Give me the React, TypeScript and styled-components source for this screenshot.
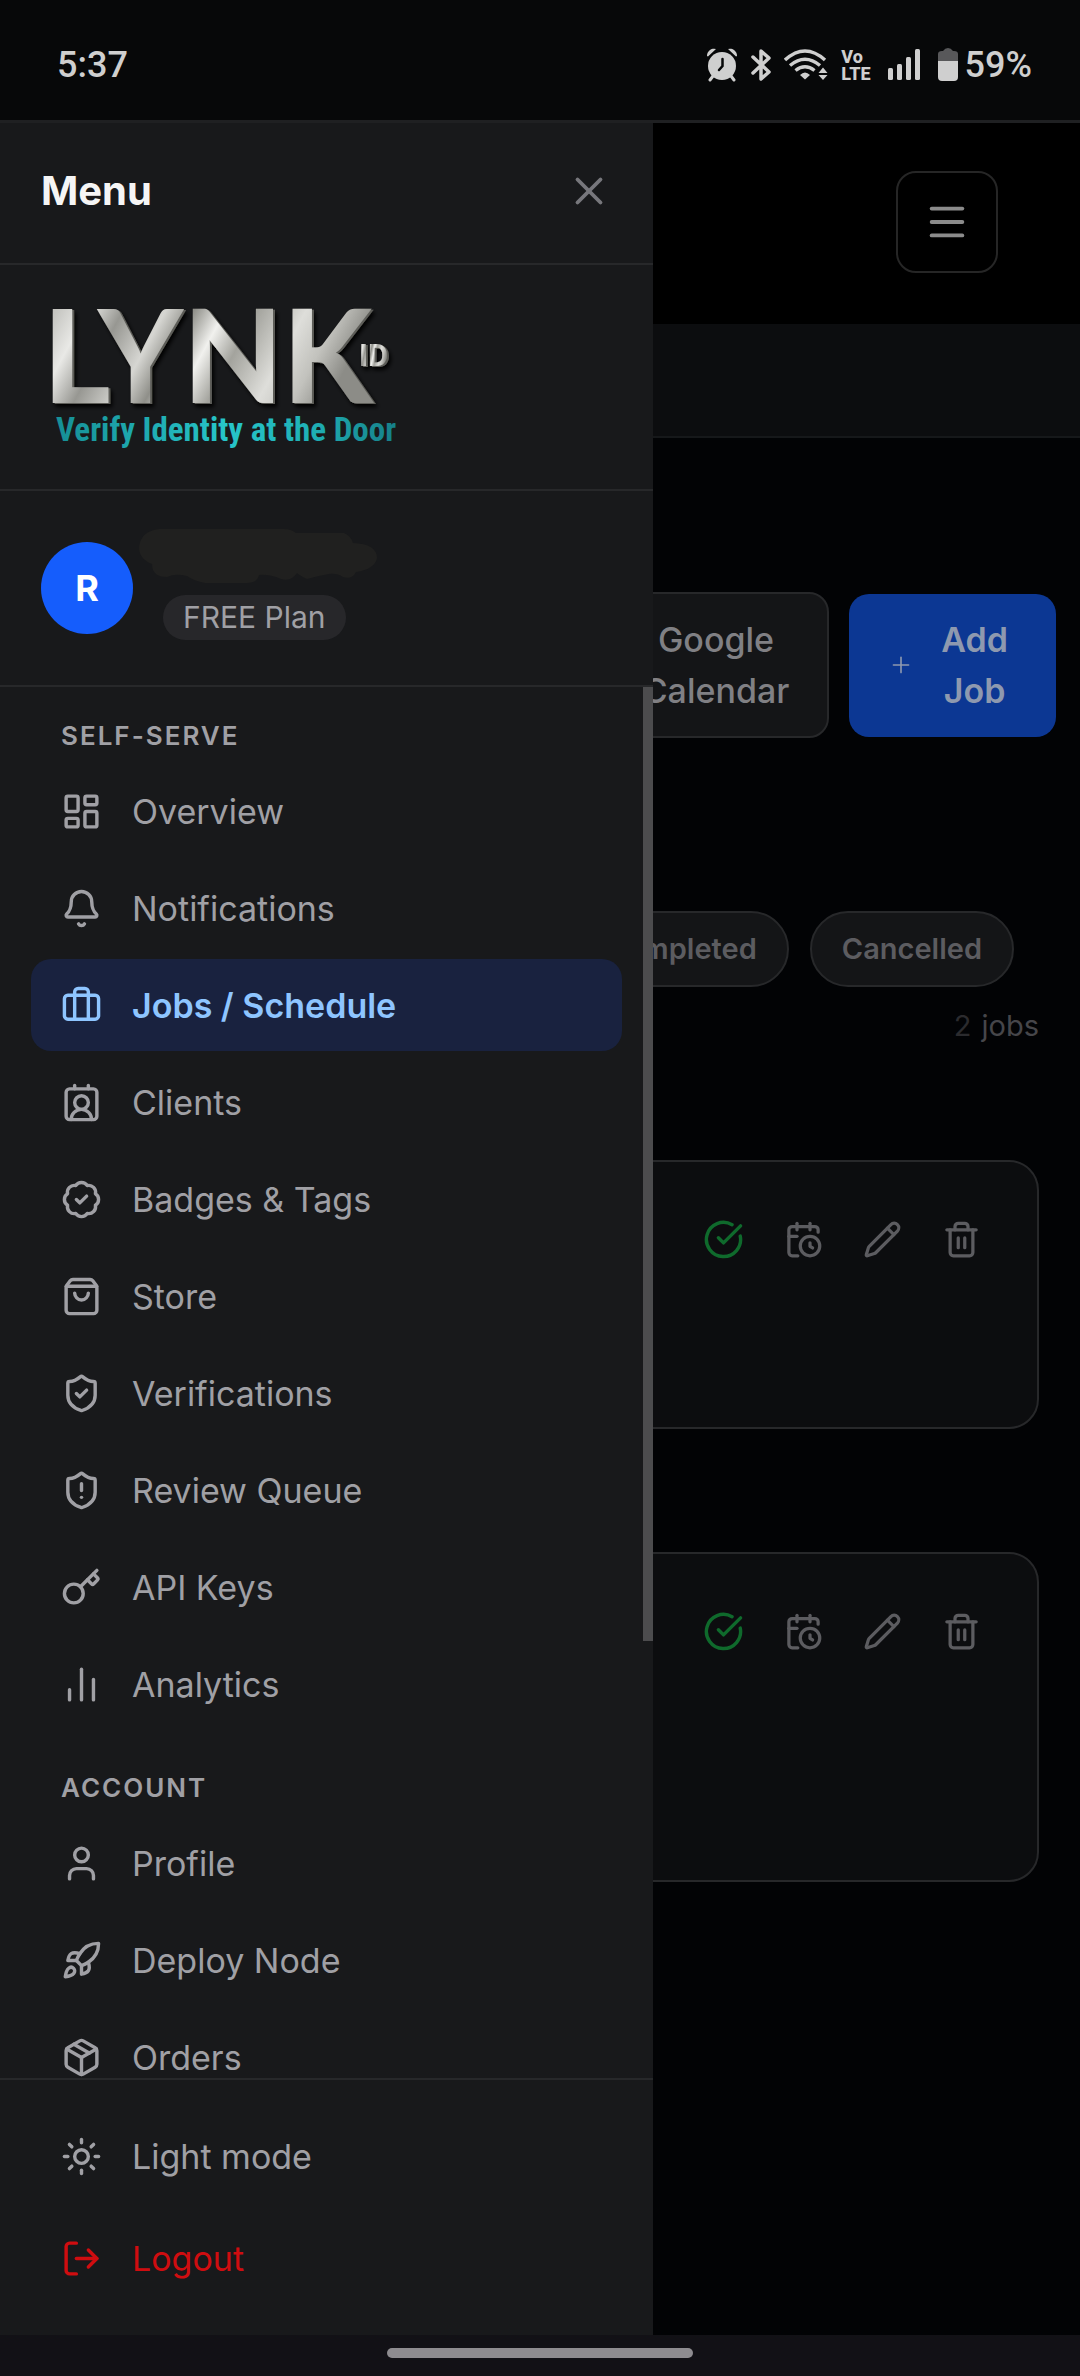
import React from 'react';
import styled, { createGlobalStyle, css } from 'styled-components';
import {
  BadgeCheck,
  Bell,
  Briefcase,
  CalendarClock,
  ChartNoAxesColumn,
  CircleCheckBig,
  ContactRound,
  Key,
  LayoutDashboard,
  LogOut,
  Menu as MenuIcon,
  Package,
  Pencil,
  Plus,
  Rocket,
  ShieldAlert,
  ShieldCheck,
  ShoppingBag,
  Sun,
  Trash2,
  User,
  X,
  type LucideIcon,
} from 'lucide-react';

const color = {
  page: '#020305',
  panel: '#18191b',
  line: '#27282a',
  surface: '#0c0d0f',
  control: '#141517',
  muted: '#a0a0a5',
  dim: '#5c5c60',
  status: '#cfcfcf',
};

const GlobalStyle = createGlobalStyle`
  *, *::before, *::after { box-sizing: border-box; }
  body {
    margin: 0;
    background: ${color.page};
    font-family: Inter, Roboto, "Liberation Sans", sans-serif;
    color: ${color.muted};
  }
  button { font: inherit; color: inherit; border: 0; background: none; padding: 0; cursor: pointer; }
  a { color: inherit; text-decoration: none; }
  ul { list-style: none; margin: 0; padding: 0; }
  h1, h2, p { margin: 0; }
  svg { flex: none; display: block; }
`;

const Screen = styled.div`
  display: flex;
  flex-direction: column;
  height: 100vh;
  overflow: hidden;
`;

/* ---------- device bars ---------- */

const StatusBar = styled.header`
  display: flex;
  align-items: center;
  justify-content: space-between;
  height: 123px;
  padding: 9px 48px 0 57px;
  background: #070809;
  border-bottom: 3px solid #1f2022;
  font-family: Roboto, sans-serif;
  font-size: 36px;
  font-weight: 500;
  color: ${color.status};
`;

const StatusIcons = styled.div`
  display: flex;
  align-items: center;
  gap: 13px;
`;

const Volte = styled.span`
  display: flex;
  flex-direction: column;
  padding-right: 4px;
  font-size: 18px;
  font-weight: 800;
  line-height: 17px;
`;

const Battery = styled.span`
  display: flex;
  align-items: center;
  gap: 7px;
  padding-left: 4px;
`;

const GestureBar = styled.footer`
  display: flex;
  flex: none;
  align-items: center;
  justify-content: center;
  height: 41px;
  padding-bottom: 6px;
  background: #121116;

  &::before {
    content: '';
    width: 306px;
    height: 10px;
    border-radius: 5px;
    background: #8e8c90;
  }
`;

/* ---------- page behind the drawer ---------- */

const Stage = styled.div`
  position: relative;
  flex: 1;
  min-height: 0;
`;

const Page = styled.main`
  height: 100%;
  overflow: hidden;
`;

const TopBar = styled.div`
  display: flex;
  justify-content: flex-end;
  padding: 48px 82px 51px;
  background: #000;
`;

const MenuButton = styled.button`
  display: grid;
  place-items: center;
  width: 102px;
  height: 102px;
  border: 2px solid #262626;
  border-radius: 20px;
  color: #8b8b8b;
`;

const Band = styled.div`
  height: 114px;
  background: ${color.surface};
  border-bottom: 2px solid #16181a;
`;

const Actions = styled.div`
  display: flex;
  align-items: center;
  justify-content: flex-end;
  gap: 20px;
  padding: 154px 24px 0;
`;

const ActionButton = styled.button<{ $primary?: boolean }>`
  display: flex;
  align-items: center;
  gap: 27px;
  padding: 20px 38px;
  border: 2px solid ${color.line};
  border-radius: 20px;
  background: ${color.control};
  font-size: 34px;
  font-weight: 500;
  line-height: 51px;
  color: #808084;

  ${(p) =>
    p.$primary &&
    css`
      padding: 20px 48px 21px 39px;
      border: 0;
      background: #0c3793;
      font-weight: 600;
      color: #8e99af;
    `}
`;

const Stacked = styled.span`
  width: min-content;
  text-align: center;
`;

const Filters = styled.div`
  display: flex;
  justify-content: flex-end;
  gap: 21px;
  padding: 173px 66px 0;
`;

const Filter = styled.button`
  flex: none;
  height: 76px;
  padding: 0 30px 2px;
  border: 2px solid ${color.line};
  border-radius: 38px;
  background: ${color.control};
  font-size: 29px;
  font-weight: 600;
  color: ${color.dim};
`;

const Count = styled.p`
  display: flex;
  justify-content: flex-end;
  gap: 10px;
  padding: 20px 41px 0;
  font-size: 29px;
  line-height: 38px;
  color: #46464a;
`;

const CountValue = styled.span`
  color: #2b2b2e;
`;

const Cards = styled.div`
  display: grid;
  gap: 123px;
  padding: 115px 41px 0;
`;

const Card = styled.article<{ $tall?: boolean }>`
  display: flex;
  align-items: flex-start;
  justify-content: flex-end;
  gap: 10px;
  min-height: ${(p) => (p.$tall ? 330 : 269)}px;
  padding: 42px 41px;
  border: 2px solid ${color.line};
  border-radius: 30px;
  background: ${color.surface};
`;

const IconButton = styled.button<{ $done?: boolean }>`
  display: grid;
  place-items: center;
  height: 70px;
  padding: 0 15px;
  color: ${(p) => (p.$done ? '#0f6a2c' : color.dim)};
`;

/* ---------- drawer ---------- */

const Drawer = styled.aside`
  position: absolute;
  top: 0;
  bottom: 0;
  left: 0;
  display: flex;
  flex-direction: column;
  width: 653px;
  max-width: 100%;
  background: ${color.panel};
`;

const DrawerHeader = styled.div`
  display: flex;
  align-items: center;
  justify-content: space-between;
  padding: 43px 41px 47px;
  border-bottom: 2px solid ${color.line};
`;

const DrawerTitle = styled.h1`
  font-size: 40px;
  font-weight: 700;
  line-height: 50px;
  color: #f5f5f5;
`;

const CloseButton = styled.button`
  display: grid;
  place-items: center;
  color: #77777c;
`;

const Brand = styled.div`
  padding: 30px 41px 26px;
  border-bottom: 2px solid ${color.line};
`;

const BrandSvg = styled.svg`
  width: 370px;
  height: 168px;
  overflow: visible;
`;

const Account = styled.div`
  display: flex;
  align-items: center;
  gap: 6px;
  padding: 38px 41px;
  border-bottom: 2px solid ${color.line};
`;

const Avatar = styled.div`
  display: grid;
  place-items: center;
  width: 92px;
  height: 92px;
  border-radius: 50%;
  background: #155dfc;
  font-size: 36px;
  font-weight: 700;
  color: #fff;
`;

const AccountText = styled.div`
  display: grid;
  justify-items: start;
  gap: 12px;
  padding-bottom: 7px;
`;

const Plan = styled.span`
  margin-left: 24px;
  padding: 0 20px;
  border-radius: 23px;
  background: #27272a;
  font-size: 30px;
  line-height: 45px;
`;

const NavFrame = styled.div`
  position: relative;
  flex: 1;
  min-height: 0;
`;

const NavScroll = styled.nav`
  height: 100%;
  padding: 20px 31px;
  overflow-y: auto;
  scrollbar-width: none;
`;

const ScrollThumb = styled.div`
  position: absolute;
  top: 0;
  right: 0;
  width: 10px;
  height: 68.6%;
  background: #4c4c4e;
`;

const NavSection = styled.section`
  & + & {
    margin-top: 29px;
  }
`;

const NavHeading = styled.h2`
  padding-left: 30px;
  font-size: 26px;
  font-weight: 600;
  line-height: 58px;
  letter-spacing: 2px;
`;

const NavList = styled.ul<{ $gap: number }>`
  display: grid;
  gap: ${(p) => p.$gap}px;
`;

const itemStyle = css<{ $active?: boolean; $danger?: boolean }>`
  display: flex;
  align-items: center;
  gap: 30px;
  width: 100%;
  height: 92px;
  padding: 0 30px;
  border-radius: 20px;
  font-size: 34px;
  color: ${color.muted};

  ${(p) =>
    p.$active &&
    css`
      background: #19223f;
      font-weight: 600;
      color: #8ec5ff;
    `}
  ${(p) =>
    p.$danger &&
    css`
      color: #cf0d10;
    `}
`;

const NavLink = styled.a<{ $active?: boolean; $danger?: boolean }>`
  ${itemStyle}
`;

const NavButton = styled.button<{ $active?: boolean; $danger?: boolean }>`
  ${itemStyle}
`;

const DrawerFooter = styled.div`
  padding: 30px 31px 31px;
  border-top: 2px solid ${color.line};
`;

type Item = { label: string; icon: LucideIcon };

const selfServe: Item[] = [
  { label: 'Overview', icon: LayoutDashboard },
  { label: 'Notifications', icon: Bell },
  { label: 'Jobs / Schedule', icon: Briefcase },
  { label: 'Clients', icon: ContactRound },
  { label: 'Badges & Tags', icon: BadgeCheck },
  { label: 'Store', icon: ShoppingBag },
  { label: 'Verifications', icon: ShieldCheck },
  { label: 'Review Queue', icon: ShieldAlert },
  { label: 'API Keys', icon: Key },
  { label: 'Analytics', icon: ChartNoAxesColumn },
];

const account: Item[] = [
  { label: 'Profile', icon: User },
  { label: 'Deploy Node', icon: Rocket },
  { label: 'Orders', icon: Package },
];

function NavGroup({ title, items, active }: { title: string; items: Item[]; active?: string }) {
  return (
    <NavSection>
      <NavHeading>{title}</NavHeading>
      <NavList $gap={5}>
        {items.map(({ label, icon: Icon }) => (
          <li key={label}>
            <NavLink href="#" $active={label === active} aria-current={label === active ? 'page' : undefined}>
              <Icon size={41} />
              {label}
            </NavLink>
          </li>
        ))}
      </NavList>
    </NavSection>
  );
}

function BrandLogo() {
  return (
    <BrandSvg viewBox="0 0 370 168" role="img" aria-label="LYNK ID">
      <defs>
        <linearGradient id="steel" x1="0" y1="0" x2="1" y2="0.25">
          <stop offset="0" stopColor="#a9a9a4" />
          <stop offset="0.1" stopColor="#c9c9c5" />
          <stop offset="0.18" stopColor="#e9e9e6" />
          <stop offset="0.28" stopColor="#979792" />
          <stop offset="0.4" stopColor="#d6d6d2" />
          <stop offset="0.48" stopColor="#8f8f89" />
          <stop offset="0.57" stopColor="#f1f1ee" />
          <stop offset="0.66" stopColor="#a3a39d" />
          <stop offset="0.8" stopColor="#dededa" />
          <stop offset="0.9" stopColor="#c2c2bd" />
          <stop offset="1" stopColor="#8c8c87" />
        </linearGradient>
        <linearGradient id="teal" x1="0" y1="0" x2="1" y2="0">
          <stop offset="0" stopColor="#168f96" />
          <stop offset="0.5" stopColor="#27c5c9" />
          <stop offset="0.75" stopColor="#1fb0b5" />
          <stop offset="1" stopColor="#167f88" />
        </linearGradient>
        <filter id="bevel" x="-5%" y="-10%" width="110%" height="125%">
          <feDropShadow dx="2" dy="1" stdDeviation="0" floodColor="#5d5d59" />
          <feDropShadow dx="2" dy="3" stdDeviation="2" floodColor="#000" />
        </filter>
      </defs>
      <g fontWeight="700" fill="url(#steel)" filter="url(#bevel)">
        <text x="2" y="108" fontFamily="Lato, sans-serif" fontWeight="900" fontSize="129">
          LYNK
        </text>
        <text x="318" y="71" fontFamily="Roboto, sans-serif" fontSize="31">
          ID
        </text>
      </g>
      <text
        x="15"
        y="146"
        fontFamily="'Roboto Condensed', 'Liberation Sans Narrow', Roboto, sans-serif"
        fontSize="33"
        fontWeight="700"
        fill="url(#teal)"
      >
        Verify Identity at the Door
      </text>
    </BrandSvg>
  );
}

function HiddenName() {
  return (
    <svg width="238" height="54" viewBox="0 0 238 54" aria-hidden="true">
      <path
        fill="#20201f"
        d="M20 0H145Q152 0 157 4H205Q212 7 214 14Q238 15 238 29Q236 40 217 43Q213 51 204 48Q198 44 190 45Q178 47 168 50Q160 46 158 44Q152 53 142 50Q130 45 120 46Q118 54 108 54H66Q55 52 48 47Q36 44 28 48Q13 48 13 35Q0 30 0 18Q2 2 20 0Z"
      />
    </svg>
  );
}

function AlarmGlyph() {
  return (
    <svg width="32" height="34" viewBox="0 0 32 34" fill="currentColor">
      <path d="M1 8A7 7 0 0 1 10 1L2 8.500ZM31 8A7 7 0 0 0 22 1L30 8.500Z" />
      <path d="M7 28 4 32M25 28 28 32" stroke="currentColor" strokeWidth="3" strokeLinecap="round" />
      <circle cx="16" cy="18" r="14" />
      <path d="M16.500 11V18L13 22" fill="none" stroke="#070809" strokeWidth="2.500" strokeLinecap="round" />
    </svg>
  );
}

function BluetoothGlyph() {
  return (
    <svg width="20" height="32" viewBox="0 0 20 32" fill="none" stroke="currentColor" strokeWidth="3.500" strokeLinejoin="round" strokeLinecap="round">
      <path d="M2 8 18 23 10 30V2L18 9 2 24" />
    </svg>
  );
}

function WifiGlyph() {
  return (
    <svg width="44" height="32" viewBox="0 0 44 32" fill="none" stroke="currentColor" strokeWidth="3.500">
      <path d="M1 11Q21-7 41 11M6 16.500Q21 4 36 16.500M11.500 21.500Q21 14 30.500 21.500" />
      <path d="M21 30.500 16 26Q21 21 26 26Z" fill="currentColor" stroke="none" />
      <path d="M39 18.500 43.500 24H34.500ZM39 31 43.500 26H34.500Z" fill="currentColor" stroke="none" />
    </svg>
  );
}

function SignalGlyph() {
  return (
    <svg width="33" height="32" viewBox="0 0 33 32" fill="currentColor">
      <rect x="0" y="19" width="5" height="12" rx="1.500" />
      <rect x="9" y="15" width="5" height="16" rx="1.500" />
      <rect x="18" y="8" width="5" height="23" rx="1.500" />
      <rect x="27" y="0" width="5" height="31" rx="1.500" />
    </svg>
  );
}

function BatteryGlyph() {
  return (
    <svg width="20" height="34" viewBox="0 0 20 34">
      <path fill="#58585a" d="M0 14V6Q0 3 4 3H5Q7 0 10 0T15 3H16Q20 3 20 6V14Z" />
      <path fill="currentColor" d="M0 13H20V29Q20 33 16 33H4Q0 33 0 29Z" />
    </svg>
  );
}

function JobCard({ tall }: { tall?: boolean }) {
  return (
    <Card $tall={tall}>
      <IconButton $done aria-label="Complete">
        <CircleCheckBig size={41} />
      </IconButton>
      <IconButton aria-label="Reschedule">
        <CalendarClock size={39} />
      </IconButton>
      <IconButton aria-label="Edit">
        <Pencil size={39} />
      </IconButton>
      <IconButton aria-label="Delete">
        <Trash2 size={39} />
      </IconButton>
    </Card>
  );
}

export default function App() {
  return (
    <Screen>
      <GlobalStyle />
      <StatusBar>
        <span>5:37</span>
        <StatusIcons>
          <AlarmGlyph />
          <BluetoothGlyph />
          <WifiGlyph />
          <Volte>
            <span>Vo</span>
            <span>LTE</span>
          </Volte>
          <SignalGlyph />
          <Battery>
            <BatteryGlyph />
            59%
          </Battery>
        </StatusIcons>
      </StatusBar>

      <Stage>
        <Page>
          <TopBar>
            <MenuButton aria-label="Open menu">
              <MenuIcon size={46} />
            </MenuButton>
          </TopBar>
          <Band />
          <Actions>
            <ActionButton>
              <Stacked>Google Calendar</Stacked>
            </ActionButton>
            <ActionButton $primary>
              <Plus size={26} strokeWidth={1.5} />
              <Stacked>Add Job</Stacked>
            </ActionButton>
          </Actions>
          <Filters>
            <Filter>Completed</Filter>
            <Filter>Cancelled</Filter>
          </Filters>
          <Count>
            <CountValue>2</CountValue> jobs
          </Count>
          <Cards>
            <JobCard />
            <JobCard tall />
          </Cards>
        </Page>

        <Drawer aria-label="Menu">
          <DrawerHeader>
            <DrawerTitle>Menu</DrawerTitle>
            <CloseButton aria-label="Close menu">
              <X size={46} />
            </CloseButton>
          </DrawerHeader>
          <Brand>
            <BrandLogo />
          </Brand>
          <Account>
            <Avatar>R</Avatar>
            <AccountText>
              <HiddenName />
              <Plan>FREE Plan</Plan>
            </AccountText>
          </Account>
          <NavFrame>
            <NavScroll>
              <NavGroup title="SELF-SERVE" items={selfServe} active="Jobs / Schedule" />
              <NavGroup title="ACCOUNT" items={account} />
            </NavScroll>
            <ScrollThumb />
          </NavFrame>
          <DrawerFooter>
            <NavList $gap={10}>
              <li>
                <NavButton>
                  <Sun size={41} />
                  Light mode
                </NavButton>
              </li>
              <li>
                <NavButton $danger>
                  <LogOut size={41} />
                  Logout
                </NavButton>
              </li>
            </NavList>
          </DrawerFooter>
        </Drawer>
      </Stage>
      <GestureBar />
    </Screen>
  );
}
